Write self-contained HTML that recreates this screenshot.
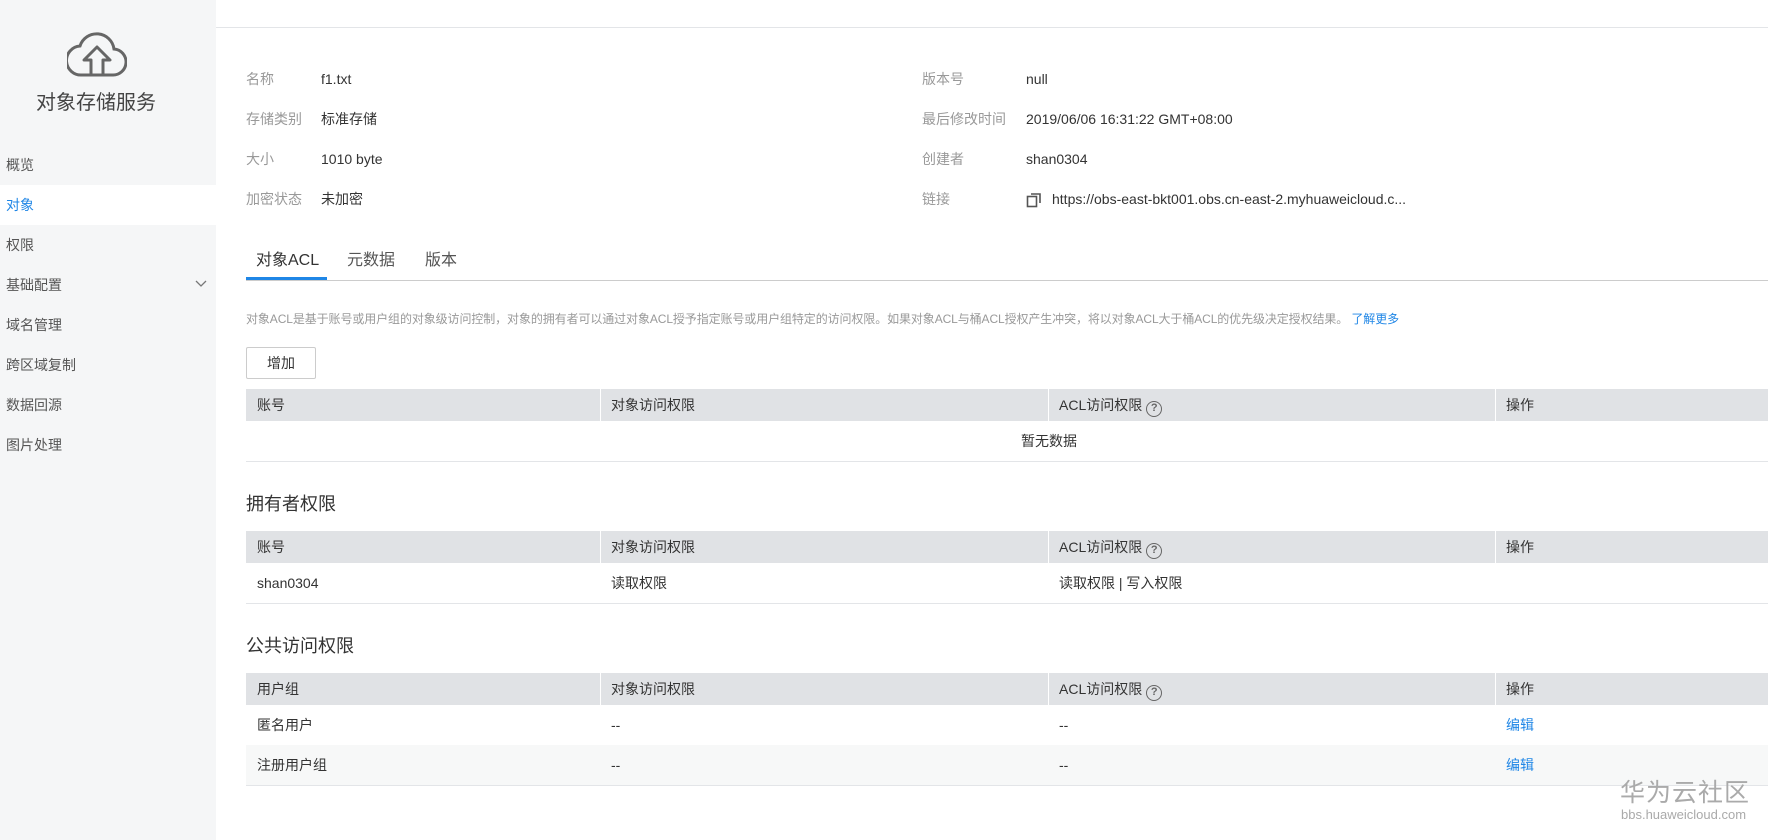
<!DOCTYPE html>
<html><head><meta charset="utf-8"><style>
*{margin:0;padding:0;box-sizing:border-box}
body{width:1768px;height:840px;overflow:hidden;background:#fff;font-family:"Liberation Sans","Noto Sans CJK SC",sans-serif;font-size:14px;color:#333;position:relative}
.sb{position:absolute;left:0;top:0;width:216px;height:840px;background:#f5f6f7}
.sb .t{position:absolute;top:86px;left:0;width:192px;text-align:center;font-size:20px;color:#444}
.mi{position:absolute;left:6px;font-size:14px;color:#555;line-height:20px}
.act{position:absolute;left:0;top:185px;width:216px;height:40px;background:#fff}
.a{position:absolute;white-space:nowrap;line-height:20px}
.lab{color:#999}
.hl{position:absolute;left:216px;right:0;top:27px;height:1px;background:#e3e5e8}
.th{position:absolute;left:246px;right:0;height:32px;background:#e0e2e5}
.sep{position:absolute;top:0;width:1px;height:32px;background:#fff}
.row{position:absolute;left:246px;right:0;border-bottom:1px solid #e3e5e8}
.q{display:inline-block;width:16px;height:16px;border:1.5px solid #666;border-radius:50%;font-size:11px;line-height:13px;text-align:center;color:#666;vertical-align:-1px;margin-left:4px;font-weight:bold}
.blue{color:#1f86e6}
</style></head><body>
<div class="sb">
<svg style="position:absolute;left:67px;top:28px" width="60" height="52" viewBox="0 0 60 52"><path d="M15 47 H45 A13 13 0 0 0 47 21 A17.5 17.5 0 0 0 13 18 A14.5 14.5 0 0 0 15 47 Z" fill="none" stroke="#666" stroke-width="3"/><path d="M24 47 V32 H17 L30 19 L43 32 H36 V47" fill="none" stroke="#666" stroke-width="3" stroke-linejoin="round"/></svg>
<div class="t">对象存储服务</div>
<div class="act"></div>
<div class="mi" style="top:155px">概览</div>
<div class="mi" style="top:195px;color:#1f86e6">对象</div>
<div class="mi" style="top:235px">权限</div>
<div class="mi" style="top:275px">基础配置</div>
<svg style="position:absolute;left:195px;top:280px" width="12" height="8"><path d="M1 1 L6 6 L11 1" fill="none" stroke="#777" stroke-width="1.3"/></svg>
<div class="mi" style="top:315px">域名管理</div>
<div class="mi" style="top:355px">跨区域复制</div>
<div class="mi" style="top:395px">数据回源</div>
<div class="mi" style="top:435px">图片处理</div>
</div>
<div class="hl"></div>

<div class="a lab" style="left:246px;top:69px">名称</div><div class="a" style="left:321px;top:69px">f1.txt</div>
<div class="a lab" style="left:246px;top:109px">存储类别</div><div class="a" style="left:321px;top:109px">标准存储</div>
<div class="a lab" style="left:246px;top:149px">大小</div><div class="a" style="left:321px;top:149px">1010 byte</div>
<div class="a lab" style="left:246px;top:189px">加密状态</div><div class="a" style="left:321px;top:189px">未加密</div>
<div class="a lab" style="left:922px;top:69px">版本号</div><div class="a" style="left:1026px;top:69px">null</div>
<div class="a lab" style="left:922px;top:109px">最后修改时间</div><div class="a" style="left:1026px;top:109px">2019/06/06 16:31:22 GMT+08:00</div>
<div class="a lab" style="left:922px;top:149px">创建者</div><div class="a" style="left:1026px;top:149px">shan0304</div>
<div class="a lab" style="left:922px;top:189px">链接</div>
<svg style="position:absolute;left:1026px;top:192px" width="16" height="16"><rect x="1.5" y="4.5" width="9" height="10" fill="none" stroke="#555" stroke-width="1.6"/><path d="M5 2 H14 V11" fill="none" stroke="#555" stroke-width="1.6"/></svg>
<div class="a" style="left:1052px;top:189px">https://obs-east-bkt001.obs.cn-east-2.myhuaweicloud.c...</div>

<div class="a" style="left:256px;top:251px;font-size:16px">对象ACL</div>
<div class="a" style="left:347px;top:251px;font-size:16px;color:#555">元数据</div>
<div class="a" style="left:425px;top:251px;font-size:16px;color:#555">版本</div>
<div style="position:absolute;left:246px;right:0;top:280px;height:1px;background:#ccc"></div>
<div style="position:absolute;left:246px;top:277px;width:81px;height:3px;background:#1f86e6"></div>

<div class="a" style="left:246px;top:309px;font-size:12px;color:#999;letter-spacing:-0.1px">对象ACL是基于账号或用户组的对象级访问控制，对象的拥有者可以通过对象ACL授予指定账号或用户组特定的访问权限。如果对象ACL与桶ACL授权产生冲突，将以对象ACL大于桶ACL的优先级决定授权结果。 <span class="blue">了解更多</span></div>
<div style="position:absolute;left:246px;top:347px;width:70px;height:32px;border:1px solid #ccc;border-radius:2px;text-align:center;line-height:30px">增加</div>

<div class="th" style="top:389px"><div class="sep" style="left:354px"></div><div class="sep" style="left:802px"></div><div class="sep" style="left:1249px"></div>
<div class="a" style="left:11px;top:6px">账号</div><div class="a" style="left:365px;top:6px">对象访问权限</div><div class="a" style="left:813px;top:6px">ACL访问权限<span class="q">?</span></div><div class="a" style="left:1260px;top:6px">操作</div></div>
<div class="row" style="top:421px;height:41px"><div class="a" style="left:775px;top:10px">暂无数据</div></div>

<div class="a" style="left:246px;top:492px;font-size:18px;line-height:24px">拥有者权限</div>
<div class="th" style="top:531px"><div class="sep" style="left:354px"></div><div class="sep" style="left:802px"></div><div class="sep" style="left:1249px"></div>
<div class="a" style="left:11px;top:6px">账号</div><div class="a" style="left:365px;top:6px">对象访问权限</div><div class="a" style="left:813px;top:6px">ACL访问权限<span class="q">?</span></div><div class="a" style="left:1260px;top:6px">操作</div></div>
<div class="row" style="top:563px;height:41px"><div class="a" style="left:11px;top:10px">shan0304</div><div class="a" style="left:365px;top:10px">读取权限</div><div class="a" style="left:813px;top:10px">读取权限 | 写入权限</div></div>

<div class="a" style="left:246px;top:634px;font-size:18px;line-height:24px">公共访问权限</div>
<div class="th" style="top:673px"><div class="sep" style="left:354px"></div><div class="sep" style="left:802px"></div><div class="sep" style="left:1249px"></div>
<div class="a" style="left:11px;top:6px">用户组</div><div class="a" style="left:365px;top:6px">对象访问权限</div><div class="a" style="left:813px;top:6px">ACL访问权限<span class="q">?</span></div><div class="a" style="left:1260px;top:6px">操作</div></div>
<div class="row" style="top:705px;height:40px;border:none"><div class="a" style="left:11px;top:10px">匿名用户</div><div class="a" style="left:365px;top:10px">--</div><div class="a" style="left:813px;top:10px">--</div><div class="a blue" style="left:1260px;top:10px">编辑</div></div>
<div class="row" style="top:745px;height:41px;background:#f7f8f8"><div class="a" style="left:11px;top:10px">注册用户组</div><div class="a" style="left:365px;top:10px">--</div><div class="a" style="left:813px;top:10px">--</div><div class="a blue" style="left:1260px;top:10px">编辑</div></div>

<div class="a" style="left:1620px;top:778px;font-size:25px;line-height:30px;color:#aaa;letter-spacing:1px">华为云社区</div>
<div class="a" style="left:1621px;top:807px;font-size:13px;line-height:16px;color:#aaa">bbs.huaweicloud.com</div>
</body></html>
